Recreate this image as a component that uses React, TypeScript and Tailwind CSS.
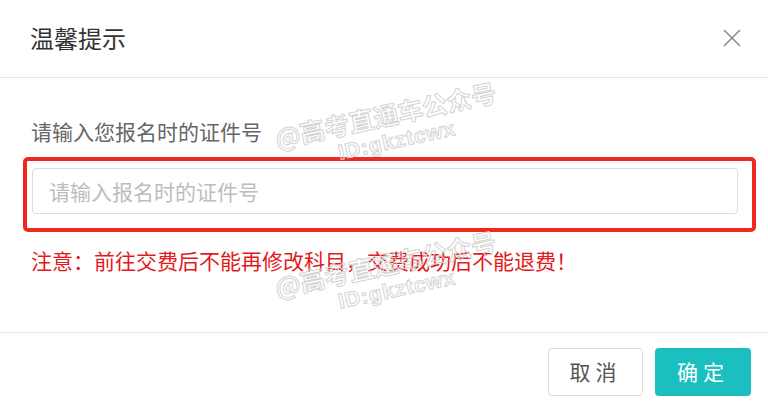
export default function App() {
  const watermark = (top: string) => (
    <div
      className={`pointer-events-none absolute left-[273px] ${top} flex w-[230px] -rotate-12 flex-col items-center font-bold text-transparent [-webkit-text-stroke:1px_#d4d4d4]`}
    >
      <span className="text-[25px] leading-[30px]">@高考直通车公众号</span>
      <span className="ml-[12px] font-['Liberation_Sans',sans-serif] text-[21px] leading-[26px] tracking-[1px]">
        ID:gkztcwx
      </span>
    </div>
  );

  return (
    <div className="relative h-[406px] w-[768px] overflow-hidden bg-white font-['Noto_Sans_CJK_SC','Microsoft_YaHei',sans-serif]">
      <div className="flex h-[78px] items-center justify-between border-b border-[#e6e6e6] pb-[2px] pl-[30px] pr-[26px]">
        <h2 className="text-[24px] leading-[32px] text-[#333]">温馨提示</h2>
        <button className="flex h-[20px] w-[20px] items-center justify-center text-[#8c8c8c]">
          <svg width="18" height="18" viewBox="0 0 18 18" fill="none">
            <path
              d="M1 1L17 17M17 1L1 17"
              stroke="currentColor"
              strokeWidth="1.6"
            />
          </svg>
        </button>
      </div>

      <div className="h-[255px] border-b border-[#e6e6e6] pl-[23px] pt-[38px]">
        <p className="pl-[8px] text-[21px] leading-[30px] text-[#666]">
          请输入您报名时的证件号
        </p>
        <div className="mt-[11px] w-[733px] rounded-[5px] border-[4px] border-[#ef2a1d] pb-[14px] pl-[5px] pr-[14px] pt-[7px]">
          <input
            type="text"
            placeholder="请输入报名时的证件号"
            className="h-[46px] w-full rounded-[4px] border border-[#dcdcdc] px-[16px] text-[21px] text-[#333] outline-none placeholder:text-[#bdbdbd]"
          />
        </div>
        <p className="mt-[13px] pl-[8px] text-[21px] leading-[30px] text-[#e3191b]">
          注意：前往交费后不能再修改科目，交费成功后不能退费！
        </p>
      </div>

      <div className="flex justify-end gap-[12px] pr-[17px] pt-[15px]">
        <button className="h-[48px] w-[95px] rounded-[4px] border border-[#dcdcdc] bg-white text-[21px] tracking-[5px] text-[#555]">
          取消
        </button>
        <button className="h-[48px] w-[96px] rounded-[4px] bg-[#1bbfbf] text-[21px] tracking-[5px] text-white">
          确定
        </button>
      </div>

      {watermark("top-[99px]")}
      {watermark("top-[248px]")}
    </div>
  );
}
